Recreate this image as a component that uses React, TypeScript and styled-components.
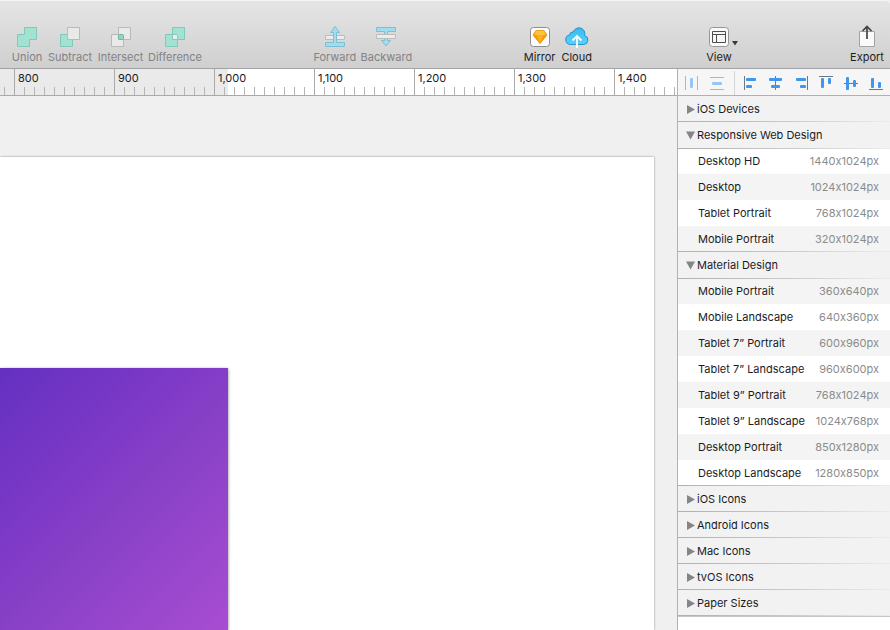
import React, { useState } from "react";
import styled, { createGlobalStyle } from "styled-components";

const GlobalStyle = createGlobalStyle`
  *, *::before, *::after { box-sizing: border-box; }
  body {
    margin: 0;
    background: #f0f0f0;
    color: #1b1b1f;
    font: 11px/16px Inter, "Liberation Sans", sans-serif;
    font-variant-ligatures: no-contextual;
  }
  button {
    font: inherit;
    font-variant-ligatures: inherit;
    color: inherit;
    background: none;
    border: 0;
    padding: 0;
    margin: 0;
  }
  svg { display: block; }
`;

const Window = styled.div`
  display: flex;
  flex-direction: column;
  min-height: 100vh;
`;

const Toolbar = styled.header`
  display: flex;
  justify-content: space-between;
  height: 69px;
  padding: 24px 7px 0 13px;
  border-top: 1px solid #f4f4f4;
  border-bottom: 1px solid #a3a3a3;
  border-top-right-radius: 4px;
  background: linear-gradient(#e6e5e6, #cfcfcf);
`;

const ToolGroup = styled.div<{ $gap?: number }>`
  display: flex;
  gap: ${(p) => p.$gap ?? 8}px;
`;

const ToolButton = styled.button<{ $width: number }>`
  display: flex;
  flex-direction: column;
  align-items: center;
  width: ${(p) => p.$width}px;
  color: #1e1e22;
  white-space: nowrap;
  &:disabled { color: #838285; }
`;

const ToolIcon = styled.span`
  position: relative;
  display: block;
  height: 24px;
`;

const Caret = styled.svg`
  position: absolute;
  left: 100%;
  top: 16px;
  margin-left: 3px;
`;

const Body = styled.div`
  display: grid;
  grid-template-columns: minmax(0, 1fr) 213px;
  flex: 1;
`;

const Workspace = styled.main`
  display: flex;
  flex-direction: column;
  overflow: hidden;
`;

const Ruler = styled.div`
  display: flex;
  height: 27px;
  padding-left: 14px;
  border-bottom: 1px solid #a9a9a9;
  overflow: hidden;
  background:
    repeating-linear-gradient(90deg, transparent 0 4px, #b4b4b4 4px 5px, transparent 5px 10px)
      left bottom / 100% 8px no-repeat,
    linear-gradient(#e9eae9, #e9eae9) left top / 228px 100% no-repeat,
    #fff;
`;

const RulerMark = styled.span`
  flex: 0 0 100px;
  padding: 1px 0 0 3px;
  border-left: 1px solid #aaa;
`;

const Canvas = styled.div`
  display: flex;
  flex: 1;
  padding: 61px 23px 0 0;
  background: #f0f0f0;
`;

const Artboard = styled.div`
  flex: 1;
  display: flex;
  padding-top: 211px;
  background: #fff;
  box-shadow: 0 0 2px rgba(0, 0, 0, 0.45);
`;

const GradientShape = styled.div`
  width: 228px;
  background: linear-gradient(135deg, #6430c0 0%, #803ac8 40%, #8640c6 52%, #a84dd2 100%);
  box-shadow: 0 1px 3px rgba(0, 0, 0, 0.5);
`;

const Inspector = styled.aside`
  border-left: 1px solid #b1b1b1;
  background: #fff;
`;

const AlignBar = styled.div`
  display: flex;
  align-items: center;
  gap: 11px;
  height: 27px;
  padding: 2px 7px 0;
  border-bottom: 1px solid #b1b1b1;
  background: #f6f6f6;
`;

const AlignButton = styled.button`
  &:disabled { opacity: 0.5; }
`;

const Divider = styled.span`
  width: 1px;
  height: 24px;
  margin: 0 -2px 0 -1px;
  background: #d4d4d4;
`;

const fadingLine = "linear-gradient(90deg, #b0b0b0, #c8c8c8 50%, #ececec)";

const GroupHeader = styled.button<{ $open: boolean }>`
  display: flex;
  align-items: center;
  gap: 2px;
  width: 100%;
  height: 26px;
  padding-left: 8px;
  text-align: left;
  background: ${(p) => (p.$open ? "none" : `${fadingLine} left bottom / 100% 1px no-repeat`)};
  background-color: #f2f2f2;
`;

const PresetList = styled.ul`
  margin: 0;
  padding: 0;
  list-style: none;
`;

const Preset = styled.li<{ $shaded: boolean }>`
  display: flex;
  align-items: center;
  justify-content: space-between;
  height: 26px;
  padding: 0 11px 0 20px;
  white-space: nowrap;
  background-color: ${(p) => (p.$shaded ? "#f4f4f4" : "#fff")};
  background-repeat: no-repeat;
  background-size: 100% 1px;
  &:first-child { background-image: ${fadingLine}; }
  &:last-child { background-image: ${fadingLine}; background-position: left bottom; }
`;

const Dimensions = styled.span`
  color: #8b8b8b;
`;

const EndLine = styled.div`
  height: 1px;
  background: #c6c6c6;
`;

const green = "#a2e2d3";
const greenEdge = "#80c8b7";
const pale = "#e9e9e9";
const paleEdge = "#b9b9b9";

type BooleanKind = "union" | "subtract" | "intersect" | "difference";

function BooleanIcon({ kind }: { kind: BooleanKind }) {
  const back = kind === "intersect" ? pale : green;
  const backEdge = kind === "intersect" ? paleEdge : greenEdge;
  const front = kind === "subtract" || kind === "intersect" ? pale : green;
  const frontEdge = kind === "subtract" || kind === "intersect" ? paleEdge : greenEdge;
  return (
    <svg width="20" height="22" viewBox="0 0 20 22">
      {kind === "union" ? (
        <path d="M7.5 2.5h12v12h-7v7h-12v-12h7z" fill={green} stroke={greenEdge} />
      ) : (
        <>
          <path d="M.5 9.5h12v12H.5z" fill={back} stroke={backEdge} />
          <path d="M7.5 2.5h12v12h-12z" fill={front} stroke={frontEdge} />
        </>
      )}
      {kind === "intersect" && <rect x="7.5" y="9.5" width="5" height="5" rx="1" fill="#8fd6c3" stroke="#6fb5a4" />}
      {kind === "difference" && <rect x="7.5" y="9.5" width="5" height="5" rx="1" fill="#ececec" stroke="#80c8b7" />}
    </svg>
  );
}

function ForwardIcon() {
  return (
    <svg width="20" height="22" viewBox="0 0 20 22">
      <path d="M.5 10.5h19v4H.5z" fill="#ececec" stroke="#bcbcbc" />
      <path d="M10 1.5 14.5 7.5h-3v10h8v4H.5v-4h8v-10h-3z" fill="#a1dcf0" stroke="#7dbfd4" />
    </svg>
  );
}

function BackwardIcon() {
  return (
    <svg width="20" height="22" viewBox="0 0 20 22">
      <path d="M.5 2.5h19v4h-8v9h3L10 21l-4.5-5.5h3v-9h-8z" fill="#a1dcf0" stroke="#7dbfd4" />
      <path d="M.5 9.5h19v4H.5z" fill="#ececec" stroke="#bcbcbc" />
    </svg>
  );
}

function MirrorIcon() {
  return (
    <svg width="20" height="22" viewBox="0 0 20 22">
      <rect x=".5" y="2.5" width="19" height="19" rx="3" fill="#fdfdfd" stroke="#8f8f8f" />
      <path d="M6 5.5h8l3 4.5-7 8.500L3 10z" fill="#fda912" />
      <path d="M6 5.5h8L15 10H5z" fill="#fdc43a" />
      <path d="M3 10h14l-7 8.5z" fill="#f59a08" />
      <path d="M6.500 10h7L10 18.500z" fill="#fdb01b" />
      <path d="M6 5.5h8l3 4.500-7 8.500L3 10z" fill="none" stroke="#e58c08" strokeWidth=".7" />
    </svg>
  );
}

function CloudIcon() {
  return (
    <svg width="24" height="24" viewBox="0 0 24 24">
      <defs>
        <linearGradient id="cloud-fill" x1="0" y1="0" x2="0" y2="1">
          <stop offset="0" stopColor="#38b9f0" />
          <stop offset="1" stopColor="#5bd2fa" />
        </linearGradient>
      </defs>
      <path
        d="M5.500 19.500a4.900 4.900 0 0 1-.8-9.700A3.200 3.200 0 0 1 8.300 7a5.900 5.900 0 0 1 11.300 3.500 4.600 4.600 0 0 1-.8 9z"
        fill="url(#cloud-fill)"
        stroke="#2393c8"
      />
      <path d="M12 23V11M7.500 15.500 12 11l4.500 4.500" fill="none" stroke="#fff" strokeWidth="1.800" />
    </svg>
  );
}

function ViewIcon() {
  return (
    <svg width="20" height="22" viewBox="0 0 20 22">
      <rect x=".5" y="2.5" width="19" height="19" rx="3" fill="#fafafa" stroke="#969696" />
      <path d="M3.500 6.500h13v11h-13zM3.500 9.500h13M7.500 9.500v8" fill="#f7f7f7" stroke="#4e4e4e" />
    </svg>
  );
}

function ExportIcon() {
  return (
    <svg width="16" height="22" viewBox="0 0 16 22">
      <path d="M.5 6.500h15v15H.5z" fill="#fafafa" stroke="#a3a3a3" />
      <path d="M8 14V1.500M3.500 6 8 1.500 12.500 6" fill="none" stroke="#434343" strokeWidth="1.700" />
    </svg>
  );
}

interface Bar {
  x: number;
  y: number;
  w: number;
  h: number;
}

interface AlignAction {
  label: string;
  lines: string;
  bars: Bar[];
  disabled?: boolean;
}

const distributeActions: AlignAction[] = [
  { label: "Distribute horizontally", disabled: true, lines: "M.5 1v14M12.5 1v14", bars: [{ x: 5, y: 3, w: 3, h: 10 }] },
  { label: "Distribute vertically", disabled: true, lines: "M0 2.5h14M0 14.5h14", bars: [{ x: 2, y: 7, w: 10, h: 3 }] },
];

const alignActions: AlignAction[] = [
  { label: "Align left", lines: "M.5 1v14", bars: [{ x: 2, y: 3, w: 10, h: 3 }, { x: 2, y: 10, w: 6, h: 3 }] },
  { label: "Align center", lines: "M6.5 1v14", bars: [{ x: 0, y: 3, w: 13, h: 3 }, { x: 2, y: 10, w: 9, h: 3 }] },
  { label: "Align right", lines: "M13.5 1v14", bars: [{ x: 2, y: 3, w: 10, h: 3 }, { x: 6, y: 10, w: 6, h: 3 }] },
  { label: "Align top", lines: "M0 1.5h14", bars: [{ x: 2, y: 3, w: 3, h: 10 }, { x: 9, y: 3, w: 3, h: 6 }] },
  { label: "Align middle", lines: "M0 8.5h14", bars: [{ x: 2, y: 2, w: 3, h: 13 }, { x: 9, y: 5, w: 3, h: 7 }] },
  { label: "Align bottom", lines: "M0 14.5h14", bars: [{ x: 2, y: 3, w: 3, h: 10 }, { x: 9, y: 7, w: 3, h: 6 }] },
];

function AlignControl({ action }: { action: AlignAction }) {
  return (
    <AlignButton aria-label={action.label} disabled={action.disabled}>
      <svg width="14" height="16" viewBox="0 0 14 16">
        <path d={action.lines} stroke="#6f7780" />
        {action.bars.map((b, i) => (
          <rect key={i} x={b.x} y={b.y} width={b.w} height={b.h} rx="1" fill="#3f96ee" />
        ))}
      </svg>
    </AlignButton>
  );
}

function Disclosure({ open }: { open: boolean }) {
  return (
    <svg width="9" height="9" viewBox="0 0 9 9">
      <path d={open ? "M0 .5h9l-4.500 8z" : "M1 0v9l8-4.500z"} fill="#858585" />
    </svg>
  );
}

interface PresetGroup {
  name: string;
  shadeFrom?: number;
  presets?: [string, string][];
}

const groups: PresetGroup[] = [
  { name: "iOS Devices" },
  {
    name: "Responsive Web Design",
    shadeFrom: 1,
    presets: [
      ["Desktop HD", "1440x1024px"],
      ["Desktop", "1024x1024px"],
      ["Tablet Portrait", "768x1024px"],
      ["Mobile Portrait", "320x1024px"],
    ],
  },
  {
    name: "Material Design",
    shadeFrom: 0,
    presets: [
      ["Mobile Portrait", "360x640px"],
      ["Mobile Landscape", "640x360px"],
      ["Tablet 7” Portrait", "600x960px"],
      ["Tablet 7” Landscape", "960x600px"],
      ["Tablet 9” Portrait", "768x1024px"],
      ["Tablet 9” Landscape", "1024x768px"],
      ["Desktop Portrait", "850x1280px"],
      ["Desktop Landscape", "1280x850px"],
    ],
  },
  { name: "iOS Icons" },
  { name: "Android Icons" },
  { name: "Mac Icons" },
  { name: "tvOS Icons" },
  { name: "Paper Sizes" },
];

function Group({ group }: { group: PresetGroup }) {
  const [open, setOpen] = useState(Boolean(group.presets));
  return (
    <section>
      <GroupHeader $open={open} aria-expanded={open} onClick={() => setOpen(!open)}>
        <Disclosure open={open} />
        {group.name}
      </GroupHeader>
      {open && group.presets && (
        <PresetList>
          {group.presets.map(([name, size], i) => (
            <Preset key={name} $shaded={i % 2 === group.shadeFrom}>
              <span>{name}</span>
              <Dimensions>{size}</Dimensions>
            </Preset>
          ))}
        </PresetList>
      )}
    </section>
  );
}

interface ToolProps {
  label: string;
  width: number;
  disabled?: boolean;
  children: React.ReactNode;
}

function Tool({ label, width, disabled, children }: ToolProps) {
  return (
    <ToolButton $width={width} disabled={disabled}>
      <ToolIcon>{children}</ToolIcon>
      {label}
    </ToolButton>
  );
}

export default function App() {
  return (
    <Window>
      <GlobalStyle />
      <Toolbar>
        <ToolGroup>
          <Tool label="Union" width={28} disabled><BooleanIcon kind="union" /></Tool>
          <Tool label="Subtract" width={42} disabled><BooleanIcon kind="subtract" /></Tool>
          <Tool label="Intersect" width={43} disabled><BooleanIcon kind="intersect" /></Tool>
          <Tool label="Difference" width={50} disabled><BooleanIcon kind="difference" /></Tool>
        </ToolGroup>
        <ToolGroup>
          <Tool label="Forward" width={39} disabled><ForwardIcon /></Tool>
          <Tool label="Backward" width={48} disabled><BackwardIcon /></Tool>
        </ToolGroup>
        <ToolGroup>
          <Tool label="Mirror" width={28}><MirrorIcon /></Tool>
          <Tool label="Cloud" width={30}><CloudIcon /></Tool>
        </ToolGroup>
        <ToolGroup $gap={120}>
          <Tool label="View" width={24}>
            <ViewIcon />
            <Caret width="6" height="5" viewBox="0 0 6 5"><path d="M0 0h6L3 4.500z" fill="#3a3a3a" /></Caret>
          </Tool>
          <Tool label="Export" width={32}><ExportIcon /></Tool>
        </ToolGroup>
      </Toolbar>
      <Body>
        <Workspace>
          <Ruler>
            {["800", "900", "1,000", "1,100", "1,200", "1,300", "1,400"].map((mark) => (
              <RulerMark key={mark}>{mark}</RulerMark>
            ))}
          </Ruler>
          <Canvas>
            <Artboard>
              <GradientShape />
            </Artboard>
          </Canvas>
        </Workspace>
        <Inspector>
          <AlignBar>
            {distributeActions.map((a) => <AlignControl key={a.label} action={a} />)}
            <Divider />
            {alignActions.map((a) => <AlignControl key={a.label} action={a} />)}
          </AlignBar>
          {groups.map((g) => <Group key={g.name} group={g} />)}
          <EndLine />
        </Inspector>
      </Body>
    </Window>
  );
}
